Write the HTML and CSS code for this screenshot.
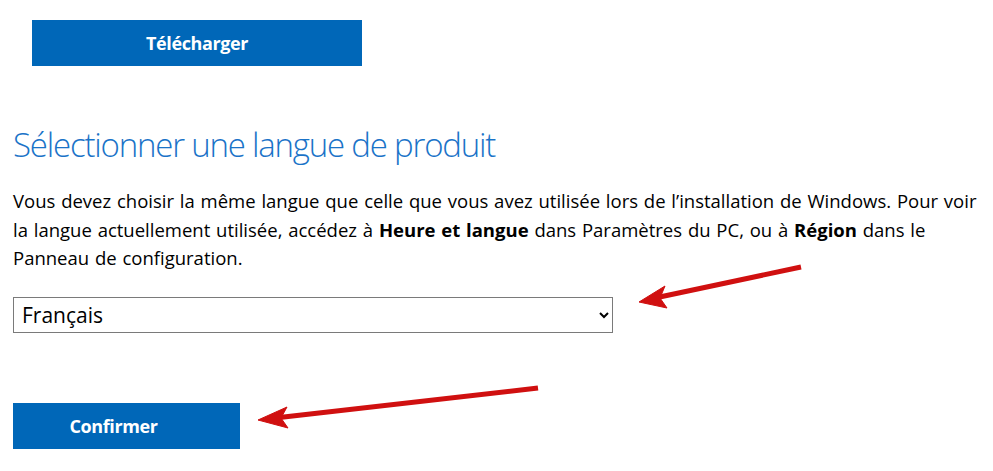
FILE: index.html
```html
<!DOCTYPE html>
<html lang="fr">
<head>
  <meta charset="UTF-8">
  <title>Télécharger Windows</title>
  <link rel="stylesheet" href="styles.css">
</head>
<body>
  <div class="page">
    <div class="download">
      <button class="btn btn-wide">Télécharger</button>
    </div>

    <h2 class="title">Sélectionner une langue de produit</h2>

    <p class="info">Vous devez choisir la même langue que celle que vous avez utilisée lors de l’installation de Windows. Pour voir la langue actuellement utilisée, accédez à <b>Heure et langue</b> dans Paramètres du PC, ou à <b>Région</b> dans le Panneau de configuration.</p>

    <select class="lang">
      <option>Français</option>
    </select>

    <div class="confirm">
      <button class="btn btn-small">Confirmer</button>
    </div>

    <!-- flèches d'annotation -->
    <svg class="arrows" width="993" height="471" viewBox="0 0 993 471">
      <g fill="#d01010" stroke="#d01010">
        <line x1="801" y1="267" x2="655" y2="298" stroke-width="5"/>
        <polygon points="639,302 665,286 660,298 667,308" stroke-width="1"/>
        <line x1="538" y1="388" x2="275" y2="418" stroke-width="5"/>
        <polygon points="258,420 287,407 281,418 288,428" stroke-width="1"/>
      </g>
    </svg>
  </div>
</body>
</html>
```

FILE: styles.css
```css
body {
  margin: 0;
  font-family: "Open Sans", "Noto Sans", sans-serif;
  color: #000;
  background-color: #fff;
}

.page {
  padding: 20px 0 0 13px;
}

.download {
  padding-left: 19px;
}

.btn {
  display: block;
  height: 46px;
  border: none;
  background-color: #0067b8;
  color: #fff;
  font-family: "Open Sans", sans-serif;
  font-size: 18px;
  font-weight: bold;
  letter-spacing: -0.4px;
}

.btn-wide {
  width: 330px;
}

.btn-small {
  width: 227px;
  padding-right: 32px;
}

.title {
  margin: 59px 0 0;
  font-size: 33px;
  font-weight: 300;
  line-height: 40px;
  letter-spacing: -1.2px;
  color: #1a73c8;
}

.info {
  width: 978px;
  margin: 22px 0 0;
  font-size: 18.5px;
  line-height: 28.5px;
  word-spacing: 1px;
}

.lang {
  display: block;
  width: 600px;
  height: 36px;
  margin-top: 24px;
  padding: 0 4px;
  border: 1px solid #7a7a7a;
  background-color: #fff;
  font-family: "Open Sans", sans-serif;
  font-size: 21px;
}

.confirm {
  margin-top: 70px;
}

.arrows {
  position: absolute;
  left: 0;
  top: 0;
  pointer-events: none;
}
```
